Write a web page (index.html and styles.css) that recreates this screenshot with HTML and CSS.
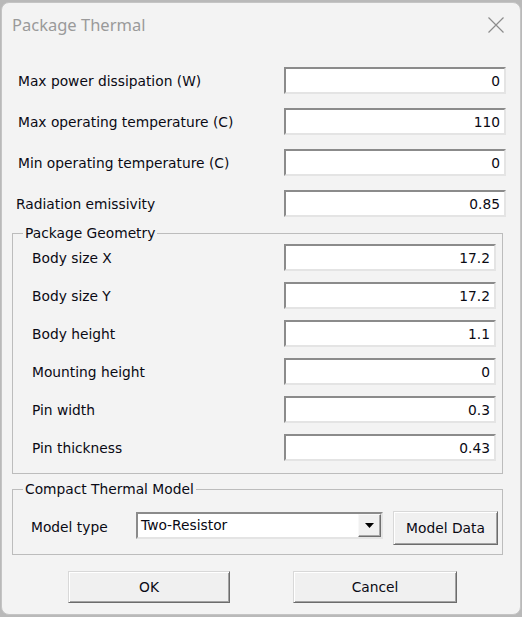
FILE: index.html
```html
<!DOCTYPE html>
<html>
<head>
<meta charset="utf-8">
<title>Package Thermal</title>
<link rel="stylesheet" href="styles.css">
</head>
<body>
<div class="dialog">
  <div class="titlebar">
    <span class="title">Package Thermal</span>
    <svg class="close" width="16" height="16" viewBox="0 0 16 16"><path d="M0.5 0.5 L15.5 15.5 M15.5 0.5 L0.5 15.5" stroke="#8c8c8c" stroke-width="1.2" fill="none"/></svg>
  </div>

  <div class="top-rows">
    <div class="row"><span class="label">Max power dissipation (W)</span><div class="field wide">0</div></div>
    <div class="row"><span class="label">Max operating temperature (C)</span><div class="field wide">110</div></div>
    <div class="row"><span class="label">Min operating temperature (C)</span><div class="field wide">0</div></div>
    <div class="row"><span class="label tight">Radiation emissivity</span><div class="field wide">0.85</div></div>
  </div>

  <fieldset class="group geom">
    <legend>Package Geometry</legend>
    <div class="geom-rows">
      <div class="row"><span class="label">Body size X</span><div class="field narrow">17.2</div></div>
      <div class="row"><span class="label">Body size Y</span><div class="field narrow">17.2</div></div>
      <div class="row"><span class="label">Body height</span><div class="field narrow">1.1</div></div>
      <div class="row"><span class="label">Mounting height</span><div class="field narrow">0</div></div>
      <div class="row"><span class="label">Pin width</span><div class="field narrow">0.3</div></div>
      <div class="row"><span class="label">Pin thickness</span><div class="field narrow">0.43</div></div>
    </div>
  </fieldset>

  <fieldset class="group ctm">
    <legend>Compact Thermal Model</legend>
    <div class="ctm-row">
      <span class="label model-label">Model type</span>
      <div class="combo">
        <span class="combo-text">Two-Resistor</span>
        <span class="combo-btn"><svg width="9" height="5" viewBox="0 0 9 5"><path d="M0 0 H9 L4.5 5 Z" fill="#000"/></svg></span>
      </div>
      <div class="btn model-btn">Model Data</div>
    </div>
  </fieldset>

  <div class="actions">
    <div class="btn ok">OK</div>
    <div class="btn cancel">Cancel</div>
  </div>
</div>
</body>
</html>
```

FILE: styles.css
```css
html, body {
  margin: 0;
  padding: 0;
}
body {
  width: 522px;
  height: 617px;
  background: #b9b9b9;
  overflow: hidden;
  font-family: "DejaVu Sans", Verdana, sans-serif;
  font-size: 13.8px;
  color: #0a0a14;
}
.dialog {
  box-sizing: border-box;
  width: 520px;
  height: 613px;
  margin: 2px 0 0 1px;
  border: 1px solid #c4c4c4;
  border-radius: 8px;
  background: #f3f3f3;
  display: flex;
  flex-direction: column;
}
.titlebar {
  height: 43px;
  display: flex;
  align-items: center;
  justify-content: space-between;
  padding: 0 16px 0 10px;
}
.title {
  font-family: "Noto Sans", "Open Sans", sans-serif;
  font-size: 16.5px;
  color: #9a9a9a;
}
.close {
  display: block;
  margin-top: 1px;
}
.top-rows {
  margin-top: 21px;
  display: grid;
  grid-template-rows: repeat(4, 27px);
  row-gap: 14px;
}
.row {
  display: flex;
  align-items: center;
}
.top-rows .label {
  padding-left: 16px;
}
.top-rows .label.tight {
  padding-left: 14px;
}
.field {
  box-sizing: border-box;
  height: 27px;
  margin-left: auto;
  background: #fff;
  border: 2px solid;
  border-color: #8b8b8b #e4e4e4 #e4e4e4 #8b8b8b;
  text-align: right;
  padding-right: 4px;
  line-height: 24px;
}
.field.wide {
  width: 222px;
  margin-right: 14px;
}
.field.narrow {
  width: 212px;
  margin-right: 6px;
}
.group {
  margin: 0 17px 0 10px;
  padding: 0;
  border: 1px solid #bcbcbc;
  min-width: 0;
}
.group legend {
  margin-left: 10px;
  padding: 0 2px;
  line-height: 17px;
}
.geom {
  margin-top: 8px;
  padding: 2px 0 12px 0;
}
.geom-rows {
  display: grid;
  grid-template-rows: repeat(6, 27px);
  row-gap: 11px;
}
.geom .label {
  padding-left: 19px;
}
.ctm {
  margin-top: 7px;
  padding: 13px 0 9px 0;
}
.ctm-row {
  display: flex;
  align-items: flex-start;
}
.model-label {
  padding-left: 18px;
  width: 105px;
  margin-top: 8px;
}
.combo {
  box-sizing: border-box;
  width: 247px;
  height: 27px;
  margin-top: 1px;
  background: #fff;
  border: 2px solid;
  border-color: #8b8b8b #e4e4e4 #e4e4e4 #8b8b8b;
  display: flex;
  align-items: stretch;
}
.combo-text {
  flex: 1;
  padding-left: 3px;
  line-height: 23px;
}
.combo-btn {
  box-sizing: border-box;
  width: 23px;
  background: #f0f0f0;
  border: 1px solid;
  border-color: #f8f8f8 #6f6f6f #6f6f6f #f8f8f8;
  box-shadow: inset -1px -1px #a8a8a8;
  display: flex;
  align-items: center;
  justify-content: center;
}
.btn {
  box-sizing: border-box;
  background: #f0f0f0;
  border: 1px solid;
  border-color: #d8d8d8 #6c6c6c #6c6c6c #d8d8d8;
  box-shadow: inset 1px 1px #fff, inset -1px -1px #a3a3a3;
  display: flex;
  align-items: center;
  justify-content: center;
}
.model-btn {
  width: 105px;
  height: 34px;
  margin-left: 10px;
}
.actions {
  display: flex;
  margin-top: 16px;
  padding-left: 66px;
  gap: 63px;
}
.ok {
  width: 162px;
  height: 32px;
}
.cancel {
  width: 164px;
  height: 32px;
}
```
